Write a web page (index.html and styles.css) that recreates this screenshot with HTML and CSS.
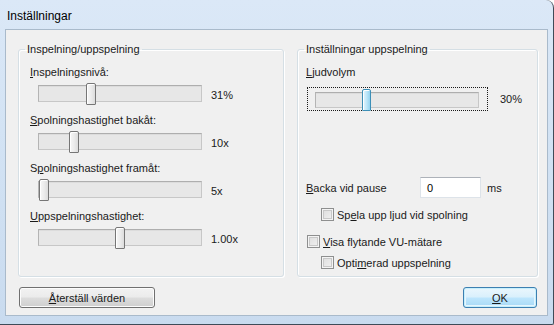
FILE: index.html
```html
<!DOCTYPE html>
<html lang="sv">
<head>
<meta charset="utf-8">
<title>Inställningar</title>
<link rel="stylesheet" href="styles.css">
</head>
<body>
<div class="window">
  <div class="titlebar">Inställningar</div>
  <div class="client">
    <div class="groups">
      <fieldset class="group group-left">
        <legend>Inspelning/uppspelning</legend>
        <div class="field">
          <div class="label"><u>I</u>nspelningsnivå:</div>
          <div class="slider-row">
            <div class="slider"><div class="track"></div><div class="thumb" style="left:48px"></div></div>
            <span class="value">31%</span>
          </div>
        </div>
        <div class="field">
          <div class="label"><u>S</u>polningshastighet bakåt:</div>
          <div class="slider-row">
            <div class="slider"><div class="track"></div><div class="thumb" style="left:31px"></div></div>
            <span class="value">10x</span>
          </div>
        </div>
        <div class="field">
          <div class="label">S<u>p</u>olningshastighet framåt:</div>
          <div class="slider-row">
            <div class="slider"><div class="track"></div><div class="thumb" style="left:1px"></div></div>
            <span class="value">5x</span>
          </div>
        </div>
        <div class="field">
          <div class="label"><u>U</u>ppspelningshastighet:</div>
          <div class="slider-row">
            <div class="slider"><div class="track"></div><div class="thumb" style="left:77px"></div></div>
            <span class="value">1.00x</span>
          </div>
        </div>
      </fieldset>
      <fieldset class="group group-right">
        <legend>Inställningar uppspelning</legend>
        <div class="label"><u>L</u>judvolym</div>
        <div class="volume-row">
          <div class="focus">
            <div class="slider slider-vol"><div class="track"></div><div class="thumb thumb-hot" style="left:47px"></div></div>
          </div>
          <span class="value value-vol">30%</span>
        </div>
        <div class="pause-row">
          <span class="pause-label"><u>B</u>acka vid pause</span>
          <span class="textbox">0</span>
          <span class="unit">ms</span>
        </div>
        <div class="check check-indent check-first"><span class="box"></span><span>Sp<u>e</u>la upp ljud vid spolning</span></div>
        <div class="check check-second"><span class="box"></span><span><u>V</u>isa flytande VU-mätare</span></div>
        <div class="check check-indent check-third"><span class="box"></span><span>Opti<u>m</u>erad uppspelning</span></div>
      </fieldset>
    </div>
    <div class="buttons">
      <button class="btn btn-reset"><u>Å</u>terställ värden</button>
      <button class="btn btn-ok"><u>O</u>K</button>
    </div>
  </div>
</div>
</body>
</html>
```
FILE: styles.css
```css
html, body {
  margin: 0;
  padding: 0;
}
body {
  width: 554px;
  height: 325px;
  overflow: hidden;
  font-family: "Liberation Sans", Arial, sans-serif;
  font-size: 11px;
  color: #1a1a1a;
}
u {
  text-decoration: underline;
  text-underline-offset: 1px;
}
.window {
  box-sizing: border-box;
  width: 554px;
  height: 325px;
  padding: 0 5px 8px 5px;
  background: linear-gradient(180deg, #dbe8f7 0%, #d3e3f4 40%, #c9dbef 100%);
  border-right: 1px solid #3f4b58;
  border-bottom: 1px solid #3f4b58;
  border-top-right-radius: 8px;
  border-bottom-right-radius: 2px;
  display: flex;
  flex-direction: column;
}
.titlebar {
  height: 29px;
  flex: none;
  box-sizing: border-box;
  padding: 9px 0 0 2px;
  font-size: 12px;
  line-height: 14px;
  color: #000;
}
.client {
  flex: 1;
  box-sizing: border-box;
  background: #f0f0f0;
  border: 1px solid #a9bacb;
  padding: 12px 9px 0 12px;
  display: flex;
  flex-direction: column;
}
.groups {
  display: flex;
  gap: 13px;
  height: 235px;
}
.group {
  margin: 0;
  box-sizing: border-box;
  border: 1px solid #d5dfe5;
  border-radius: 3px;
  box-shadow: inset 1px 1px 0 #fff, 1px 1px 0 #fff;
  padding: 9px 0 0 0;
  min-width: 0;
  display: flex;
  flex-direction: column;
}
.group legend {
  padding: 0 2px;
  line-height: 14px;
  color: #1a1a1a;
}
.group-left {
  width: 266px;
  padding-left: 11px;
}
.group-left legend {
  margin-left: -5px;
}
.group-right {
  width: 241px;
  padding-left: 8px;
}
.group-right legend {
  margin-left: -2px;
}
.label {
  line-height: 14px;
  height: 14px;
  white-space: nowrap;
}
.field {
  display: flex;
  flex-direction: column;
  gap: 4px;
  margin-bottom: 8px;
}
.slider-row {
  display: flex;
  align-items: center;
  padding-left: 8px;
  height: 22px;
}
.slider {
  position: relative;
  width: 164px;
  height: 22px;
  flex: none;
}
.track {
  position: absolute;
  left: 0;
  right: 0;
  top: 2px;
  height: 17px;
  box-sizing: border-box;
  background: #e7e7e7;
  border: 1px solid #c7c7c7;
  border-top-color: #aeaeae;
  border-left-color: #b4b4b4;
  box-shadow: inset 0 1px 0 #dcdcdc;
}
.thumb {
  position: absolute;
  top: 0;
  width: 10px;
  height: 22px;
  box-sizing: border-box;
  border: 1px solid #767676;
  border-radius: 2px 2px 1px 1px;
  background: linear-gradient(90deg, #f7f7f7 0%, #ececec 50%, #dcdcdc 100%);
  box-shadow: inset 1px 1px 0 #fff;
}
.thumb-hot {
  width: 9px;
  border-color: #3c8fb7;
  background: linear-gradient(90deg, #e4f5fd 0%, #bfe7f9 50%, #94d3f0 100%);
}
.value {
  margin-left: 9px;
  padding-top: 2px;
  line-height: 14px;
}
.volume-row {
  display: flex;
  align-items: center;
  margin-top: 8px;
  margin-left: 1px;
  height: 24px;
}
.focus {
  box-sizing: border-box;
  width: 181px;
  height: 24px;
  border: 1px dotted #1a1a1a;
  padding: 1px 0 0 7px;
}
.slider-vol {
  width: 164px;
  height: 22px;
}
.slider-vol .track {
  top: 3px;
  height: 16px;
}
.value-vol {
  margin-left: 12px;
  padding-top: 0;
}
.pause-row {
  display: flex;
  align-items: center;
  margin-top: 66px;
  height: 21px;
}
.pause-label {
  width: 114px;
  line-height: 14px;
}
.textbox {
  box-sizing: border-box;
  width: 61px;
  height: 21px;
  background: #fff;
  border: 1px solid #dde3e9;
  border-top-color: #adb2b9;
  padding: 3px 0 0 6px;
  line-height: 14px;
  color: #000;
}
.unit {
  margin-left: 6px;
  line-height: 14px;
}
.check {
  display: flex;
  align-items: center;
  gap: 3px;
  height: 13px;
  line-height: 14px;
  white-space: nowrap;
}
.check-indent {
  padding-left: 15px;
}
.check-second {
  padding-left: 1px;
}
.check-first {
  margin-top: 10px;
}
.check-second {
  margin-top: 14px;
}
.check-third {
  margin-top: 8px;
}
.box {
  box-sizing: border-box;
  width: 13px;
  height: 13px;
  flex: none;
  border: 1px solid #8e8f8f;
  background: linear-gradient(135deg, #dcdcdc 0%, #f2f2f2 100%);
  box-shadow: inset 0 0 0 1px #f4f4f4, inset 0 0 0 2px #c8c8c8;
}
.buttons {
  display: flex;
  justify-content: space-between;
  align-items: flex-start;
  margin-top: 10px;
  padding-left: 1px;
}
.btn {
  box-sizing: border-box;
  height: 21px;
  margin: 0;
  padding: 0;
  font-family: inherit;
  font-size: 11px;
  line-height: 14px;
  color: #1a1a1a;
  border: 1px solid #707070;
  border-radius: 3px;
  background: linear-gradient(180deg, #f2f2f2 0%, #ebebeb 49%, #dddddd 51%, #cfcfcf 100%);
  box-shadow: inset 0 0 0 1px #fcfcfc;
}
.btn-reset {
  width: 136px;
}
.btn-ok {
  width: 74px;
  margin-right: 1px;
  border-color: #3c7fb1;
  background: linear-gradient(180deg, #eaf6fd 0%, #d9f0fc 49%, #bee6fd 51%, #a7d9f5 100%);
  box-shadow: inset 0 0 0 1px #48d8fb33, inset 0 0 0 2px #e6f5fd;
}
```
